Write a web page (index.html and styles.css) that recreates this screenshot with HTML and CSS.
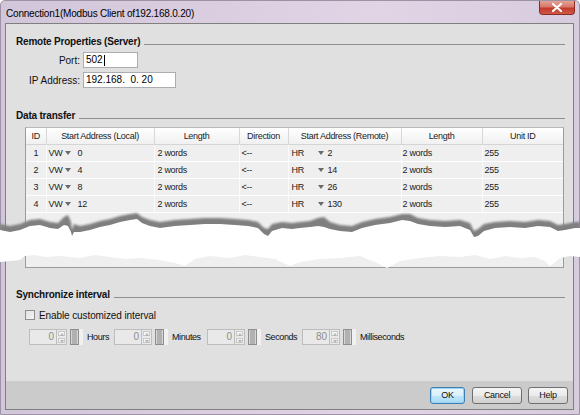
FILE: index.html
```html
<!DOCTYPE html>
<html>
<head>
<meta charset="utf-8">
<link rel="stylesheet" href="styles.css">
</head>
<body>
<div class="window">
  <div class="titlebar">
    <span class="title">Connection1(Modbus Client of192.168.0.20)</span>
    <div class="close">
      <svg width="12" height="9" viewBox="0 0 12 9"><path d="M2 1 L10 8 M10 1 L2 8" stroke="#fff" stroke-width="2.2" stroke-linecap="round"/></svg>
    </div>
  </div>
  <div class="client">
    <div class="content">
      <section class="group">
        <div class="group-title"><span>Remote Properties (Server)</span><i class="rule"></i></div>
        <div class="form">
          <label class="flabel">Port:</label><div class="field port">502<i class="caret"></i></div>
          <label class="flabel">IP Address:</label><div class="field ip">192.168.&nbsp; 0. 20</div>
        </div>
      </section>

      <section class="group data">
        <div class="group-title"><span>Data transfer</span><i class="rule"></i></div>
        <div class="tableview">
          <table class="grid">
            <colgroup>
              <col class="w-id"><col class="w-local"><col class="w-len"><col class="w-dir"><col class="w-remote"><col class="w-len2"><col class="w-unit">
            </colgroup>
            <thead>
              <tr><th>ID</th><th>Start Address (Local)</th><th>Length</th><th>Direction</th><th>Start Address (Remote)</th><th>Length</th><th>Unit ID</th></tr>
            </thead>
            <tbody>
              <tr><td class="c-id">1</td><td><span class="reg">VW</span><i class="dd"></i>0</td><td>2 words</td><td>&lt;--</td><td class="c-rem"><span class="reg2">HR</span><i class="dd r"></i>2</td><td>2 words</td><td>255</td></tr>
              <tr><td class="c-id">2</td><td><span class="reg">VW</span><i class="dd"></i>4</td><td>2 words</td><td>&lt;--</td><td class="c-rem"><span class="reg2">HR</span><i class="dd r"></i>14</td><td>2 words</td><td>255</td></tr>
              <tr><td class="c-id">3</td><td><span class="reg">VW</span><i class="dd"></i>8</td><td>2 words</td><td>&lt;--</td><td class="c-rem"><span class="reg2">HR</span><i class="dd r"></i>26</td><td>2 words</td><td>255</td></tr>
              <tr><td class="c-id">4</td><td><span class="reg">VW</span><i class="dd"></i>12</td><td>2 words</td><td>&lt;--</td><td class="c-rem"><span class="reg2">HR</span><i class="dd r"></i>130</td><td>2 words</td><td>255</td></tr>
            </tbody>
          </table>
        </div>
      </section>

      <section class="group sync">
        <div class="group-title"><span>Synchronize interval</span><i class="rule"></i></div>
        <div class="check-row"><i class="checkbox"></i><span>Enable customized interval</span></div>
        <div class="spin-row">
          <div class="spin"><div class="spin-input">0</div><div class="spin-btns"><b class="up"></b><b class="down"></b></div></div>
          <div class="slider"><i></i></div>
          <span class="unit u1">Hours</span>
          <div class="spin"><div class="spin-input">0</div><div class="spin-btns"><b class="up"></b><b class="down"></b></div></div>
          <div class="slider"><i></i></div>
          <span class="unit u2">Minutes</span>
          <div class="spin"><div class="spin-input">0</div><div class="spin-btns"><b class="up"></b><b class="down"></b></div></div>
          <div class="slider"><i></i></div>
          <span class="unit u3">Seconds</span>
          <div class="spin"><div class="spin-input">80</div><div class="spin-btns"><b class="up"></b><b class="down"></b></div></div>
          <div class="slider"><i></i></div>
          <span class="unit">Milliseconds</span>
        </div>
      </section>
    </div>
    <div class="buttonbar">
      <button class="btn ok">OK</button>
      <button class="btn cancel">Cancel</button>
      <button class="btn help">Help</button>
    </div>
  </div>

  <svg class="tear" width="580" height="70" viewBox="0 205 580 70">
    <defs>
      <filter id="soft" x="-5%" y="-50%" width="110%" height="200%"><feGaussianBlur stdDeviation="0.9"/></filter>
    </defs>
    <polygon filter="url(#soft)" fill="#7f7f7f" points="0,224 10,226 20,224 30,220 40,219 50,222 58,223 64,217 68,215 71,222 72,230 74,224 80,226 90,224 100,221 110,219 120,216 130,214 137,213 142,217 150,220 160,222 175,220 190,219 205,218 220,218 235,219 248,220 258,222 264,228 268,229 272,224 282,222 292,223 300,222 310,221 318,218 324,217 330,222 340,225 352,226 362,222 375,219 390,217 402,214 410,214 418,218 430,220 445,221 460,220 470,223 474,231 478,229 484,224 495,222 510,221 525,222 538,220 550,221 558,225 565,224 575,222 580,222 580,245 0,245"/>
    <polygon fill="#ffffff" points="0,230 10,232 20,230 30,226 40,225 50,228 58,229 64,225 68,226 71,232 72,236 74,232 80,232 90,230 100,227 110,225 120,222 130,220 137,219 142,223 150,226 160,228 175,226 190,225 205,224 220,224 235,225 248,226 258,228 264,234 268,236 272,231 282,228 292,229 300,228 310,227 318,226 324,227 330,229 340,231 352,232 362,228 375,225 390,223 402,220 410,221 418,224 430,226 445,227 460,226 470,230 474,237 478,236 484,231 495,228 510,227 525,228 538,226 550,227 558,231 565,230 575,228 580,228 580,257 570,256 560,258 550,266 545,261 535,257 520,258 505,256 490,259 475,255 460,257 440,256 420,258 400,261 387,268 375,262 360,256 340,258 320,259 300,262 290,266 275,259 260,257 245,255 230,258 210,256 195,259 185,266 175,263 160,260 140,258 125,259 110,257 95,255 80,258 60,256 45,257 35,255 25,256 20,260 10,261 0,262"/>
  </svg>
</div>
</body>
</html>
```
FILE: styles.css
```css
html, body {
  margin: 0;
  padding: 0;
}
body {
  width: 580px;
  height: 415px;
  overflow: hidden;
  font-family: "Liberation Sans", Arial, sans-serif;
  font-size: 10px;
  color: #000;
}
.window {
  position: relative;
  width: 580px;
  height: 415px;
  box-sizing: border-box;
  border: 1px solid #9d92a4;
  border-radius: 5px 5px 0 0;
  background: linear-gradient(90deg, #d2c6da 0%, #dacde0 35%, #e0d4e5 65%, #d7cbde 100%);
  display: flex;
  flex-direction: column;
}
.titlebar {
  height: 22px;
  display: flex;
  align-items: center;
  padding-left: 5px;
  flex: none;
}
.title {
  flex: 1;
  font-size: 10px;
  letter-spacing: -0.2px;
  color: #000;
  padding-top: 2px;
}
.close {
  align-self: flex-start;
  width: 36px;
  height: 14px;
  margin-right: 4px;
  box-sizing: border-box;
  border: 1px solid #8a2c22;
  border-top: none;
  border-radius: 0 0 4px 4px;
  background: linear-gradient(180deg, #e3a395 0%, #d7776a 45%, #c3392b 55%, #cf5a48 100%);
  display: flex;
  align-items: center;
  justify-content: center;
}
.close svg {
  display: block;
}
.client {
  flex: 1;
  margin: 0 5px 4px 4px;
  border: 1px solid #7f7f7f;
  display: flex;
  flex-direction: column;
  background: #e0e0e0;
}
.content {
  flex: 1;
  padding: 11px 8px 0 10px;
  display: flex;
  flex-direction: column;
}
.group-title {
  display: flex;
  height: 14px;
  line-height: 14px;
  font-weight: bold;
  letter-spacing: -0.2px;
  color: #111;
}
.rule {
  flex: 1;
  height: 0;
  border-top: 1px solid #8e8e8e;
  margin: 9px 0 0 4px;
}
.form {
  display: grid;
  grid-template-columns: 64px auto;
  column-gap: 3px;
  row-gap: 4px;
  margin-top: 3px;
  justify-items: start;
  align-items: center;
}
.flabel {
  justify-self: end;
  color: #111;
}
.field {
  height: 16px;
  box-sizing: border-box;
  border: 1px solid #abadb3;
  background: #fff;
  line-height: 14px;
  padding-left: 2px;
  color: #000;
  display: flex;
  align-items: center;
}
.field.port { width: 55px; }
.field.ip { width: 93px; }
.caret {
  display: inline-block;
  width: 1px;
  height: 11px;
  background: #000;
  margin-left: 1px;
}
.data {
  margin-top: 21px;
}
.tableview {
  margin: 4px 1px 0 9px;
  height: 141px;
  box-sizing: border-box;
  border: 1px solid #9c9c9c;
  border-top-color: #b9b9b9;
  background: #efefef;
  overflow: hidden;
}
.grid {
  border-collapse: collapse;
  table-layout: fixed;
  width: 537px;
  font-size: 9px;
  letter-spacing: -0.3px;
  color: #1b1b1b;
}
.w-id { width: 20px; }
.w-local { width: 108px; }
.w-len { width: 85px; }
.w-dir { width: 49px; }
.w-remote { width: 113px; }
.w-len2 { width: 81px; }
.w-unit { width: 81px; }
.grid th {
  height: 16px;
  padding: 0;
  font-weight: normal;
  text-align: center;
  background: linear-gradient(180deg, #ffffff 0%, #f7f7f7 50%, #f0f0f0 100%);
  border-right: 1px solid #d8d8d8;
  border-bottom: 1px solid #d5d5d5;
  color: #222;
}
.grid th:last-child { border-right: none; }
.grid td {
  height: 16px;
  padding: 0 0 0 3px;
  border-right: 1px solid #fbfbfb;
  border-bottom: 1px solid #ffffff;
  background: #efefef;
  white-space: nowrap;
}
.grid td:last-child { border-right: none; }
.grid td.c-id {
  text-align: center;
  padding: 0;
}
.grid td:nth-child(2) { padding-left: 2px; }
.grid td:nth-child(4) { padding-left: 2px; }
.grid td:nth-child(6) { padding-left: 1px; }
.grid td:nth-child(7) { padding-left: 2px; }
.reg {
  display: inline-block;
  width: 16px;
}
.reg2 {
  display: inline-block;
  width: 26px;
}
.dd {
  display: inline-block;
  width: 0;
  height: 0;
  border-left: 3.5px solid transparent;
  border-right: 3.5px solid transparent;
  border-top: 4px solid #6a6a6a;
  margin-right: 7px;
  vertical-align: 1px;
}
.dd.r { margin-right: 4px; }
.sync {
  margin-top: 20px;
}
.check-row {
  display: flex;
  align-items: center;
  margin: 7px 0 0 9px;
  height: 12px;
  letter-spacing: -0.1px;
  color: #111;
}
.checkbox {
  width: 10px;
  height: 10px;
  box-sizing: border-box;
  border: 1px solid #8f8f8f;
  background: linear-gradient(135deg, #e2e2e2, #f4f4f4);
  margin-right: 4px;
}
.spin-row {
  display: flex;
  align-items: center;
  margin: 8px 0 0 13px;
  height: 16px;
}
.spin {
  display: flex;
  width: 38px;
  height: 16px;
}
.spin-input {
  width: 27px;
  box-sizing: border-box;
  border: 1px solid #bdbdbd;
  border-right: none;
  background: #e9e9e9;
  color: #8e8e8e;
  text-align: right;
  padding-right: 2px;
  line-height: 14px;
  font-size: 10px;
}
.spin-btns {
  width: 11px;
  display: flex;
  flex-direction: column;
  border: 1px solid #bdbdbd;
  box-sizing: border-box;
  background: #e9e9e9;
}
.spin-btns b {
  flex: 1;
  margin: 1px;
  border: 1px solid #c9c9c9;
  background: #f2f2f2;
  position: relative;
}
.spin-btns b::after {
  content: "";
  position: absolute;
  left: 1px;
  top: 1px;
  border-left: 2.5px solid transparent;
  border-right: 2.5px solid transparent;
}
.spin-btns b.up::after { border-bottom: 3px solid #b4b4b4; }
.spin-btns b.down::after { border-top: 3px solid #b4b4b4; }
.slider {
  width: 13px;
  height: 16px;
  margin-left: 3px;
  background: #f1f1f1;
  display: flex;
  align-items: stretch;
}
.slider i {
  width: 9px;
  box-sizing: border-box;
  border: 1px solid #8d8d8d;
  background: #b1b1b1;
  box-shadow: inset 1px 0 0 #d6d6d6, inset -1px 0 0 #d6d6d6;
}
.unit {
  margin-left: 4px;
  font-size: 9px;
  letter-spacing: -0.4px;
  color: #111;
}
.unit.u1 { width: 27px; }
.unit.u2 { width: 35px; }
.unit.u3 { width: 37px; }
.buttonbar {
  height: 28px;
  flex: none;
  background: #cbcbcb;
  display: flex;
  align-items: center;
  justify-content: flex-end;
  padding-right: 5px;
}
.btn {
  height: 17px;
  margin-left: 7px;
  padding: 0;
  box-sizing: border-box;
  border: 1px solid #707070;
  border-radius: 3px;
  background: linear-gradient(180deg, #f4f4f4 0%, #ebebeb 50%, #dddddd 51%, #d0d0d0 100%);
  font-family: "Liberation Sans", Arial, sans-serif;
  font-size: 9px;
  letter-spacing: -0.3px;
  color: #111;
}
.btn.ok {
  width: 35px;
  border-color: #3c7fb1;
  background: linear-gradient(180deg, #eaf6fd 0%, #d9f0fc 50%, #bee6fd 51%, #a7d9f5 100%);
  box-shadow: inset 0 0 0 1px #9ed3f3;
}
.btn.cancel { width: 50px; }
.btn.help { width: 40px; margin-left: 6px; }
.tear {
  position: absolute;
  left: -1px;
  top: 204px;
}
```
